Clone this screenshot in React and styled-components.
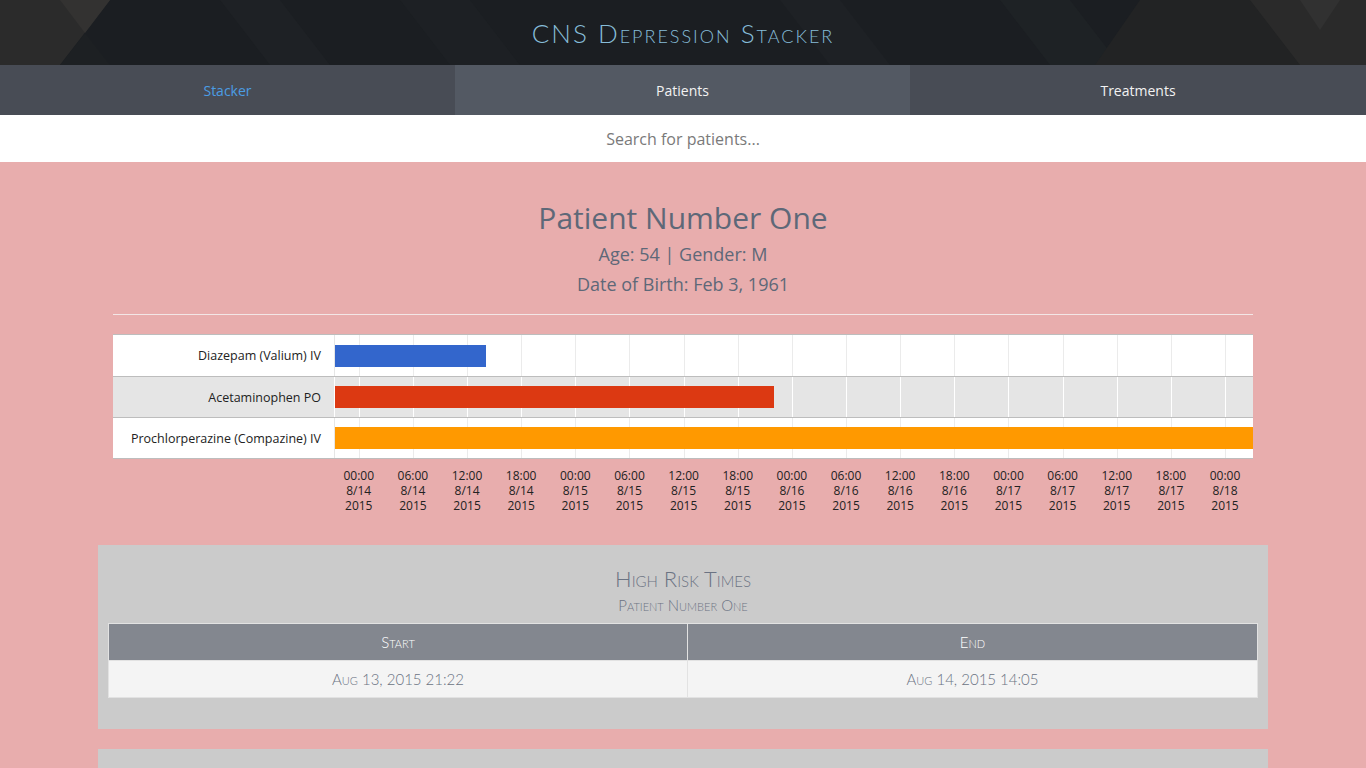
import React from "react";
import styled, { createGlobalStyle } from "styled-components";

const GlobalStyle = createGlobalStyle`
  html, body {
    margin: 0;
    padding: 0;
    background: #e8adad;
    font-family: "Open Sans", "Liberation Sans", sans-serif;
  }
  * { box-sizing: border-box; }
`;

const Header = styled.header`
  position: relative;
  height: 65px;
  background: #1b1e22;
  display: flex;
  align-items: center;
  justify-content: center;
  overflow: hidden;
`;

const HeaderArt = styled.svg`
  position: absolute;
  inset: 0;
  width: 100%;
  height: 100%;
`;

const Brand = styled.h1`
  position: relative;
  margin: 0;
  font-family: Lato, "Open Sans", sans-serif;
  font-weight: 300;
  font-size: 26px;
  font-variant: small-caps;
  letter-spacing: 2px;
  color: #86bcd8;
`;

const Nav = styled.nav`
  display: grid;
  grid-template-columns: 455px 455px 1fr;
  height: 50px;
`;

const Tab = styled.a`
  display: flex;
  align-items: center;
  justify-content: center;
  font-family: "Open Sans", sans-serif;
  font-size: 14px;
  color: ${({ active }) => (active ? "#4b9de4" : "#f2f2f2")};
  background: ${({ light }) => (light ? "#535963" : "#484c55")};
  text-decoration: none;
  cursor: pointer;
`;

const Search = styled.input`
  display: block;
  width: 100%;
  height: 47px;
  border: none;
  outline: none;
  background: #fff;
  text-align: center;
  font-family: "Open Sans", sans-serif;
  font-size: 16px;
  color: #555;
  &::placeholder { color: #7a7a7a; }
`;

const Container = styled.main`
  width: 1170px;
  margin: 0 auto;
  padding-top: 36px;
`;

const PatientHead = styled.section`
  padding: 0 15px;
  text-align: center;
  color: #5e6878;
`;

const Name = styled.h2`
  margin: 0;
  font-weight: 400;
  font-size: 30px;
  line-height: 40px;
`;

const Info = styled.p`
  margin: 0;
  font-size: 18px;
  line-height: 30px;
  &:first-of-type { margin-top: 1px; }
`;

const Rule = styled.hr`
  margin: 15px 0 19px;
  border: none;
  border-top: 1px solid #f3e6e6;
`;

const Chart = styled.div`
  margin: 0 15px;
`;

const ChartBody = styled.div`
  border: 1px solid #bdbdbd;
  border-left: none;
  border-right: none;
  background: #fff;
`;

const Row = styled.div`
  display: grid;
  grid-template-columns: 222px 1fr;
  height: 41px;
  background: ${({ shade }) => (shade ? "#e5e5e5" : "#fff")};
  & + & { border-top: 1px solid #bdbdbd; }
`;

const RowLabel = styled.div`
  display: flex;
  align-items: center;
  justify-content: flex-end;
  padding-right: 13px;
  font-size: 12.5px;
  color: #222;
  border-right: 1px solid ${({ shade }) => (shade ? "#fff" : "#e6e6e6")};
`;

const Track = styled.div`
  position: relative;
  display: flex;
  align-items: center;
`;

const GridLine = styled.span`
  position: absolute;
  top: 0;
  bottom: 0;
  width: 1px;
  background: ${({ shade }) => (shade ? "#fff" : "#ebebeb")};
`;

const Bar = styled.div`
  position: relative;
  height: 22px;
  background: ${({ color }) => color};
`;

const Axis = styled.div`
  position: relative;
  height: 60px;
  margin-left: 222px;
`;

const Tick = styled.div`
  position: absolute;
  top: 9px;
  width: 60px;
  margin-left: -30px;
  text-align: center;
  font-size: 12px;
  line-height: 15px;
  color: #222;
`;

const Panel = styled.section`
  margin-top: ${({ gap }) => gap}px;
  background: #cbcbcb;
  padding: 21px 10px 31px;
  min-height: ${({ minH }) => minH || 0}px;
`;

const PanelTitle = styled.h3`
  margin: 0;
  text-align: center;
  font-family: Lato, "Open Sans", sans-serif;
  font-weight: 300;
  font-variant: small-caps;
  font-size: 22px;
  line-height: 26px;
  color: #6b7383;
`;

const PanelSub = styled.div`
  margin: 4px 0 9px;
  text-align: center;
  font-family: Lato, "Open Sans", sans-serif;
  font-weight: 300;
  font-variant: small-caps;
  font-size: 15px;
  line-height: 18px;
  color: #6b7383;
`;

const Table = styled.table`
  width: 100%;
  border-collapse: collapse;
  border: 1px solid #e2e2e2;
  font-family: Lato, "Open Sans", sans-serif;
  font-weight: 300;
  font-variant: small-caps;
  font-size: 15px;
`;

const Th = styled.th`
  height: 37px;
  width: ${({ w }) => w || "auto"};
  background: #83878f;
  color: #fff;
  font-weight: 300;
  border: 1px solid #e2e2e2;
`;

const Td = styled.td`
  height: 37px;
  background: #f4f4f4;
  color: #6b7383;
  text-align: center;
  border: 1px solid #e2e2e2;
`;

// hours relative to 8/14 00:00
const DOMAIN = [-2.633, 99.1];
const pct = (h) => ((h - DOMAIN[0]) / (DOMAIN[1] - DOMAIN[0])) * 100;

const meds = [
  { name: "Diazepam (Valium) IV", end: 14.083, color: "#3366cc" },
  { name: "Acetaminophen PO", end: 46.05, color: "#dc3912" },
  { name: "Prochlorperazine (Compazine) IV", end: 99.1, color: "#ff9900" },
];

const ticks = Array.from({ length: 17 }, (_, i) => {
  const h = i * 6;
  const day = 14 + Math.floor(h / 24);
  const hh = String(h % 24).padStart(2, "0");
  return { h, time: `${hh}:00`, date: `8/${day}` };
});

const HeaderBackdrop = () => (
  <HeaderArt viewBox="0 0 1366 65" preserveAspectRatio="none">
    <polygon points="0,0 110,0 60,65 0,65" fill="#2b2b2b" />
    <polygon points="60,0 110,0 85,33" fill="#333231" />
    <polygon points="85,33 110,65 60,65" fill="#1d2023" />
    <polygon points="220,0 280,0 330,65 270,65" fill="#1e2125" />
    <polygon points="400,0 470,0 520,65 450,65" fill="#1d2024" />
    <polygon points="780,0 840,0 890,65 830,65" fill="#1e2125" />
    <polygon points="1000,0 1070,0 1120,65 1050,65" fill="#1e2225" />
    <polygon points="1140,0 1366,0 1366,65 1095,65" fill="#222324" />
    <polygon points="1250,0 1366,0 1366,65 1300,65" fill="#2a2a2a" />
    <polygon points="1300,0 1340,0 1320,30" fill="#313131" />
  </HeaderArt>
);

const Timeline = () => (
  <Chart>
    <ChartBody>
      {meds.map((m, i) => {
        const shade = i === 1;
        return (
          <Row key={m.name} shade={shade}>
            <RowLabel shade={shade}>{m.name}</RowLabel>
            <Track>
              {ticks.map((t) => (
                <GridLine key={t.h} shade={shade} style={{ left: `${pct(t.h)}%` }} />
              ))}
              <Bar color={m.color} style={{ width: `${pct(m.end)}%` }} />
            </Track>
          </Row>
        );
      })}
    </ChartBody>
    <Axis>
      {ticks.map((t) => (
        <Tick key={t.h} style={{ left: `${pct(t.h)}%` }}>
          {t.time}
          <br />
          {t.date}
          <br />
          2015
        </Tick>
      ))}
    </Axis>
  </Chart>
);

export default function App() {
  return (
    <>
      <GlobalStyle />
      <Header>
        <HeaderBackdrop />
        <Brand>CNS Depression Stacker</Brand>
      </Header>
      <Nav>
        <Tab active>Stacker</Tab>
        <Tab light>Patients</Tab>
        <Tab>Treatments</Tab>
      </Nav>
      <Search placeholder="Search for patients..." />
      <Container>
        <PatientHead>
          <Name>Patient Number One</Name>
          <Info>Age: 54 | Gender: M</Info>
          <Info>Date of Birth: Feb 3, 1961</Info>
          <Rule />
        </PatientHead>
        <Timeline />
        <Panel gap={26}>
          <PanelTitle>High Risk Times</PanelTitle>
          <PanelSub>Patient Number One</PanelSub>
          <Table>
            <thead>
              <tr>
                <Th w="579px">Start</Th>
                <Th>End</Th>
              </tr>
            </thead>
            <tbody>
              <tr>
                <Td>Aug 13, 2015 21:22</Td>
                <Td>Aug 14, 2015 14:05</Td>
              </tr>
            </tbody>
          </Table>
        </Panel>
        <Panel gap={20} minH={200} />
      </Container>
    </>
  );
}
